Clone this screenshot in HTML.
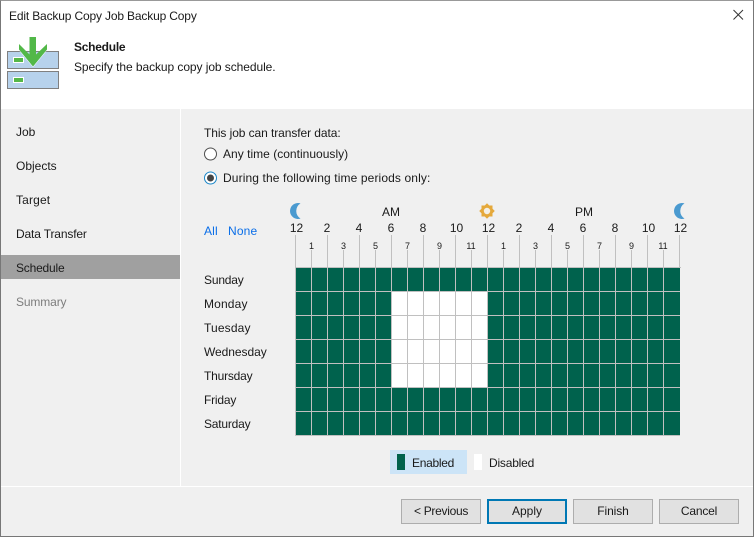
<!DOCTYPE html>
<html><head><meta charset="utf-8"><style>
html,body{margin:0;padding:0}
body{width:754px;height:537px;position:relative;overflow:hidden;background:#f0f0f0;font-family:"Liberation Sans",sans-serif;font-size:12px;color:#1a1a1a}
.t{position:absolute;white-space:nowrap;line-height:16px}
.c{transform:translateX(-50%)}
.b{position:absolute;top:499px;width:78px;height:23px;background:#e1e1e1;border:1px solid #adadad;text-align:center;line-height:23px}
</style></head><body>
<div style="position:absolute;left:0;top:0;width:754px;height:109px;background:#fff"></div>
<div style="position:absolute;left:180px;top:109px;width:1px;height:377px;background:#fff"></div>
<div style="position:absolute;left:0;top:486px;width:754px;height:1px;background:#fff"></div>
<div style="position:absolute;left:1px;top:255px;width:179px;height:24px;background:#a0a0a0"></div>
<div class="t" style="left:9px;top:8px;letter-spacing:-.16px">Edit Backup Copy Job Backup Copy</div>
<svg style="position:absolute;left:732px;top:8px" width="14" height="14"><path d="M1.500 2L11 11.500M11 2L1.500 11.500" stroke="#333" stroke-width="1"/></svg>
<svg style="position:absolute;left:0;top:30px" width="70" height="65">
<rect x="7.500" y="21.500" width="51" height="17" fill="#b7d2ec" stroke="#808080"/>
<rect x="7.500" y="41.500" width="51" height="17" fill="#b7d2ec" stroke="#808080"/>
<rect x="13.500" y="27.500" width="10" height="5" fill="#55b748" stroke="#fff"/>
<rect x="13.500" y="47.500" width="10" height="5" fill="#55b748" stroke="#fff"/>
<path d="M29.500 7H36V24.500L47 14V19.500L33 36.500L19 19.500V14L29.500 24.500Z" fill="#52b848"/>
<path d="M19 20L33 37L47 20" fill="none" stroke="#fff" stroke-width=".5"/>
</svg>
<div class="t" style="left:74px;top:39px;font-weight:bold;letter-spacing:-.25px">Schedule</div>
<div class="t" style="left:74px;top:59px;letter-spacing:-.07px">Specify the backup copy job schedule.</div>

<div class="t" style="left:16px;top:124px">Job</div>
<div class="t" style="left:16px;top:158px">Objects</div>
<div class="t" style="left:16px;top:192px;letter-spacing:.15px">Target</div>
<div class="t" style="left:16px;top:226px;letter-spacing:-.15px">Data Transfer</div>
<div class="t" style="left:16px;top:260px;letter-spacing:-.2px">Schedule</div>
<div class="t" style="left:16px;top:294px;color:#7d7d7d;letter-spacing:-.13px">Summary</div>

<div class="t" style="left:204px;top:125px;letter-spacing:-.08px">This job can transfer data:</div>
<svg style="position:absolute;left:203px;top:147px" width="15" height="38">
<circle cx="7.500" cy="7" r="6" fill="#fff" stroke="#4d4d4d"/>
<circle cx="7.500" cy="31" r="6" fill="#fff" stroke="#1a86c8"/>
<circle cx="7.500" cy="31" r="3.500" fill="#444"/>
</svg>
<div class="t" style="left:223px;top:146px;letter-spacing:.02px">Any time (continuously)</div>
<div class="t" style="left:223px;top:170px;letter-spacing:.12px">During the following time periods only:</div>

<div class="t" style="left:204px;top:223px;color:#0a6ee8;letter-spacing:.15px">All</div>
<div class="t" style="left:228px;top:223px;color:#0a6ee8;letter-spacing:.15px">None</div>

<svg style="position:absolute;left:285px;top:198px" width="410" height="30">
<path d="M15.500 5.400A8 8 0 1 0 15.500 20.600A8.900 8.900 0 0 1 15.500 5.400Z" fill="#4a9ad0"/>
<path d="M399.500 5.400A8 8 0 1 0 399.500 20.600A8.900 8.900 0 0 1 399.500 5.400Z" fill="#4a9ad0"/>
<rect x="196.500" y="7.500" width="11" height="11" fill="#e5a93b"/>
<rect x="196.500" y="7.500" width="11" height="11" fill="#e5a93b" transform="rotate(45 202 13)"/>
<circle cx="202" cy="13" r="3.200" fill="#f4f0e6"/>
</svg>
<div class="t c" style="left:391px;top:204px">AM</div>
<div class="t c" style="left:584px;top:204px">PM</div>

<div class="t c" style="left:296.500px;top:220px">12</div>
<div class="t c" style="left:327px;top:220px">2</div>
<div class="t c" style="left:359px;top:220px">4</div>
<div class="t c" style="left:391px;top:220px">6</div>
<div class="t c" style="left:423px;top:220px">8</div>
<div class="t c" style="left:456.500px;top:220px">10</div>
<div class="t c" style="left:488.500px;top:220px">12</div>
<div class="t c" style="left:519px;top:220px">2</div>
<div class="t c" style="left:551px;top:220px">4</div>
<div class="t c" style="left:583px;top:220px">6</div>
<div class="t c" style="left:615px;top:220px">8</div>
<div class="t c" style="left:648.500px;top:220px">10</div>
<div class="t c" style="left:680.500px;top:220px">12</div>

<div style="font-size:9px">
<div class="t c" style="left:311.500px;top:238px">1</div>
<div class="t c" style="left:343.500px;top:238px">3</div>
<div class="t c" style="left:375.500px;top:238px">5</div>
<div class="t c" style="left:407.500px;top:238px">7</div>
<div class="t c" style="left:439.500px;top:238px">9</div>
<div class="t c" style="left:471px;top:238px">11</div>
<div class="t c" style="left:503.500px;top:238px">1</div>
<div class="t c" style="left:535.500px;top:238px">3</div>
<div class="t c" style="left:567.500px;top:238px">5</div>
<div class="t c" style="left:599.500px;top:238px">7</div>
<div class="t c" style="left:631.500px;top:238px">9</div>
<div class="t c" style="left:663px;top:238px">11</div>
</div>

<svg style="position:absolute;left:0;top:0" width="754" height="537" shape-rendering="crispEdges">
<rect x="295" y="267" width="385" height="169" fill="#00624d"/>
<rect x="391" y="291" width="96" height="96" fill="#fff"/>
<path fill="none" stroke="#c0c0c0" d="M295.500 235V267M327.500 235V267M359.500 235V267M391.500 235V267M423.500 235V267M455.500 235V267M487.500 235V267M519.500 235V267M551.500 235V267M583.500 235V267M615.500 235V267M647.500 235V267M679.500 235V267
M311.500 250V267M343.500 250V267M375.500 250V267M407.500 250V267M439.500 250V267M471.500 250V267M503.500 250V267M535.500 250V267M567.500 250V267M599.500 250V267M631.500 250V267M663.500 250V267
M295.500 267V436M311.500 267V436M327.500 267V436M343.500 267V436M359.500 267V436M375.500 267V436M391.500 267V436M407.500 267V436M423.500 267V436M439.500 267V436M455.500 267V436M471.500 267V436M487.500 267V436M503.500 267V436M519.500 267V436M535.500 267V436M551.500 267V436M567.500 267V436M583.500 267V436M599.500 267V436M615.500 267V436M631.500 267V436M647.500 267V436M663.500 267V436
M295 267.500H681M295 291.500H680M295 315.500H680M295 339.500H680M295 363.500H680M295 387.500H680M295 411.500H680M295 435.500H680"/>
</svg>

<div class="t" style="left:204px;top:272px;letter-spacing:-.18px">Sunday</div>
<div class="t" style="left:204px;top:296px;letter-spacing:.15px">Monday</div>
<div class="t" style="left:204px;top:320px;letter-spacing:.15px">Tuesday</div>
<div class="t" style="left:204px;top:344px;letter-spacing:-.05px">Wednesday</div>
<div class="t" style="left:204px;top:368px;letter-spacing:-.2px">Thursday</div>
<div class="t" style="left:204px;top:392px;letter-spacing:-.2px">Friday</div>
<div class="t" style="left:204px;top:416px;letter-spacing:-.2px">Saturday</div>

<div style="position:absolute;left:390px;top:450px;width:77px;height:24px;background:#cce4f7"></div>
<div style="position:absolute;left:397px;top:454px;width:8px;height:16px;background:#00624d"></div>
<div class="t" style="left:412px;top:455px;letter-spacing:-.28px">Enabled</div>
<div style="position:absolute;left:474px;top:454px;width:8px;height:16px;background:#fff"></div>
<div class="t" style="left:489px;top:455px;letter-spacing:-.2px">Disabled</div>

<div class="b" style="left:401px;letter-spacing:-.3px">&lt; Previous</div>
<div class="b" style="left:487px;width:76px;height:21px;line-height:21px;border:2px solid #0078b4">Apply</div>
<div class="b" style="left:573px;letter-spacing:-.1px">Finish</div>
<div class="b" style="left:659px;letter-spacing:-.2px">Cancel</div>

<div style="position:absolute;left:0;top:0;width:752px;height:535px;border:1px solid #777;border-top-color:#999"></div>
</body></html>
